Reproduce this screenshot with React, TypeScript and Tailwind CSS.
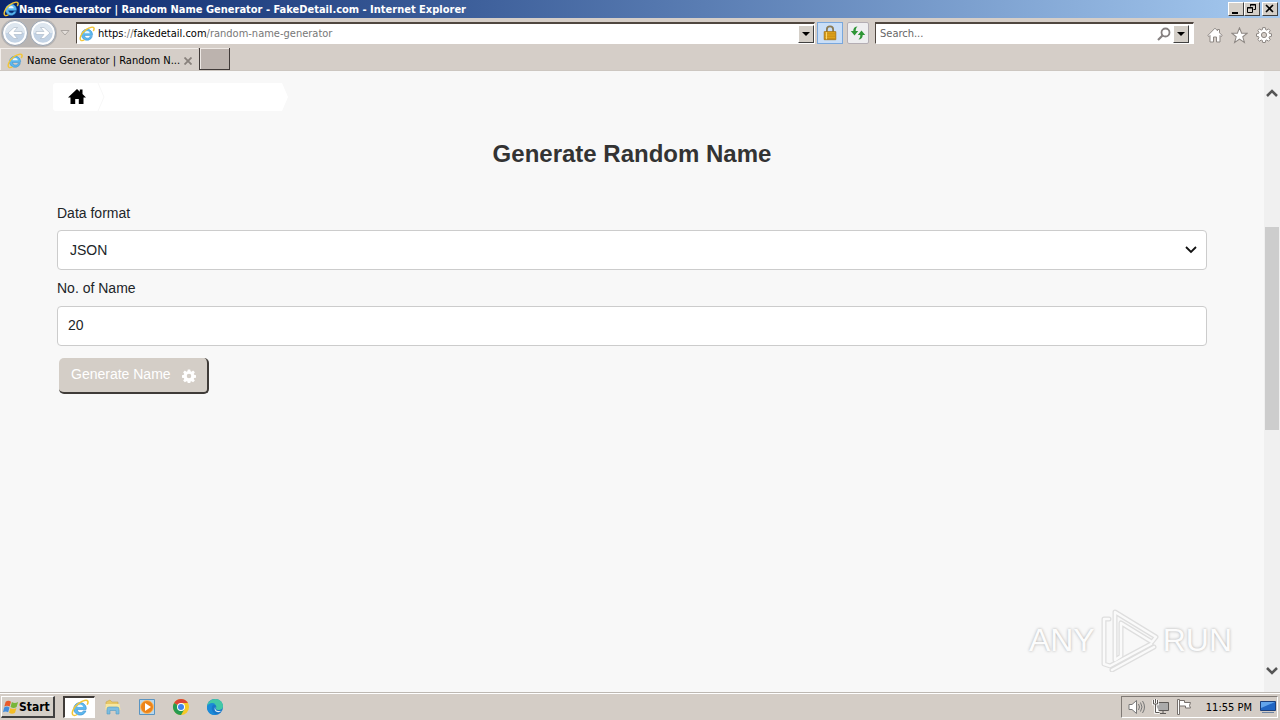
import React from "react";

const chromeFont = "font-['DejaVu_Sans_Condensed','DejaVu_Sans',sans-serif]";
const raised =
  "border border-t-white border-l-white border-r-[#404040] border-b-[#404040] bg-[#d4cfc8]";

function IeIcon({ className = "size-4" }: { className?: string }) {
  return (
    <svg viewBox="0 0 16 16" className={`shrink-0 ${className}`} fill="none">
      <path d="M13.4 9.4H5.4a3 3 0 0 0 5.600 1.200h2.300A5.600 5.600 0 1 1 13.600 8.200z" fill="#5db8ee" stroke="#2b86cd" strokeWidth=".5" />
      <path d="M5.400 7.200h5.500a2.800 2.800 0 0 0-5.500 0z" fill="#eef7fd" />
      <path d="M2 14.4C-.2 12.6 2.400 6.800 7.200 3.600c3.500-2.400 6.900-3.100 7.700-1.700.4.8.1 2-.6 3.100" stroke="#f3c534" strokeWidth="1.400" />
      <path d="M2 14.400c.9.600 2.200.2 3.500-.6" stroke="#f3c534" strokeWidth="1.200" />
    </svg>
  );
}

function TitleBar() {
  return (
    <header className="flex h-[18px] items-center justify-between bg-linear-to-r from-[#0a246a] to-[#a6caf0] pr-0.5 pl-[3px]">
      <div className="flex items-center">
        <IeIcon />
        <h1 className="pt-px text-[11px] leading-4 font-bold whitespace-nowrap text-white">
          Name Generator | Random Name Generator - FakeDetail.com - Internet Explorer
        </h1>
      </div>
      <div className="flex">
        <button aria-label="Minimize" className={`h-[14px] w-4 ${raised}`}>
          <svg viewBox="0 0 14 12" className="h-3 w-[14px]">
            <path d="M3 9h6v2H3z" />
          </svg>
        </button>
        <button aria-label="Restore" className={`h-[14px] w-4 ${raised}`}>
          <svg viewBox="0 0 14 12" className="h-3 w-[14px]" fill="none" stroke="#000">
            <path d="M5.500 3.500V1.500h5v5h-2M5 2h6M2.500 4.500h5v5h-5zM2 5h6" />
          </svg>
        </button>
        <button aria-label="Close" className={`ml-0.5 h-[14px] w-4 ${raised}`}>
          <svg viewBox="0 0 14 12" className="h-3 w-[14px]" stroke="#000" strokeWidth="1.600">
            <path d="M3 2l7 7M10 2l-7 7" />
          </svg>
        </button>
      </div>
    </header>
  );
}

function NavArrow({ label, flip }: { label: string; flip?: boolean }) {
  return (
    <button aria-label={label} className="size-7">
      <svg viewBox="0 0 28 28" className="size-7">
        <circle cx="14" cy="14" r="12.500" fill="#f4f6f9" stroke="#9ba5b2" />
        <circle cx="14" cy="14" r="10.500" fill="#c3d3e5" stroke="#fff" strokeWidth="1.500" />
        <path d="M4 14a10 10 0 0 1 20 0z" fill="#dde6ef" />
        <path
          d={flip ? "M7 12.500h8l-3.500-4H15l6 5.500-6 5.500h-3.500l3.500-4H7z" : "M21 12.500h-8l3.500-4H13L7 14l6 5.500h3.500l-3.500-4h8z"}
          fill="#fff"
          stroke="#a7b5c5"
          strokeWidth=".6"
        />
      </svg>
    </button>
  );
}

function DropButton({ label }: { label: string }) {
  return (
    <button aria-label={label} className={`flex h-[18px] w-4 shrink-0 items-center justify-center ${raised}`}>
      <svg viewBox="0 0 8 4" className="h-1 w-2">
        <path d="M0 0h8L4 4z" />
      </svg>
    </button>
  );
}

function AddressRow() {
  return (
    <div className="flex h-[30px] items-center">
      <div className="ml-px flex rounded-full bg-[#b9b5b3]">
        <NavArrow label="Back" />
        <NavArrow label="Forward" flip />
      </div>
      <button aria-label="Recent pages" className="ml-0.5 flex h-5 w-3 items-center justify-center">
        <svg viewBox="0 0 10 6" className="h-1.5 w-2.5">
          <path d="M1 .5h8l-4 4.500z" fill="#e4dfdb" stroke="#aaa4a0" />
        </svg>
      </button>
      <div className="ml-[5px] flex h-[22px] flex-1 items-center border border-t-2 border-[#504740] border-r-white border-b-white bg-white pl-0.5">
        <IeIcon />
        <div className="ml-[3px] flex-1 text-[11px] leading-4 text-[#777]">
          <span className="text-black">https</span>://<span className="text-black">fakedetail.com</span>
          /random-name-generator
        </div>
        <DropButton label="Show address history" />
      </div>
      <button aria-label="Security report" className="ml-0.5 flex h-[22px] w-[26px] items-center justify-center border border-[#79a7dc] bg-[#c9def7]">
        <svg viewBox="0 0 14 18" className="h-4 w-[14px]">
          <path d="M3.500 8V5a3.500 3.500 0 0 1 7 0v3" fill="none" stroke="#8b7b55" strokeWidth="2" />
          <path d="M.5 7.500h13v9H.5z" fill="#e5a81b" stroke="#a77312" />
          <path d="M1 10h12M1 12.500h12M1 15h12" stroke="#b67e12" strokeWidth=".8" />
          <path d="M3 8v8" stroke="#ffe282" />
        </svg>
      </button>
      <button aria-label="Refresh" className="ml-1 flex h-[22px] w-[22px] items-center justify-center rounded-xs border border-[#b4aeb4] bg-[#eeeef0]">
        <svg viewBox="0 0 16 16" className="size-4" fill="#2e9636">
          <path d="M7.500 1.500C5 1.600 3.300 3 3.300 6H.8l3.700 4.500L8.200 6H5.700c0-2 .5-3.300 1.800-4.500z" />
          <path d="M8.500 14.500c2.500-.1 4.200-1.500 4.200-4.500h2.500l-3.700-4.500L7.800 10h2.500c0 2-.5 3.300-1.800 4.500z" />
        </svg>
      </button>
      <div className="mr-[13px] ml-1.5 flex h-[22px] w-[319px] items-center border border-t-2 border-[#504740] border-r-white border-b-white bg-white pr-1 pl-1">
        <input
          type="text"
          aria-label="Search"
          placeholder="Search..."
          className="min-w-0 flex-1 text-[11px] leading-4 outline-none placeholder:text-[#666]"
        />
        <button aria-label="Go" className="mr-0.5">
          <svg viewBox="0 0 14 14" className="size-[14px]" fill="none" stroke="#858080" strokeWidth="1.800">
            <circle cx="8.500" cy="5.500" r="4" />
            <path d="M5.500 8.500l-4.500 4.500" strokeWidth="2.200" />
          </svg>
        </button>
        <DropButton label="Search options" />
      </div>
      <div className="flex items-center gap-2 pt-1 pr-2">
        <button aria-label="Home">
          <svg viewBox="0 0 16 16" className="size-4" fill="#fff" stroke="#8d8783">
            <path d="M8 1.200L.8 8.500l1.200 1 1-1V15h3.500v-5h3v5H13V8.500l1 1 1.200-1L12.500 5.800V2.500h-2v1.300z" />
          </svg>
        </button>
        <button aria-label="Favorites">
          <svg viewBox="0 0 16 16" className="size-[17px]" fill="#fff" stroke="#8d8783">
            <path d="M8 .8l2 5h5.300l-4.200 3.400 1.500 5.300L8 11.400l-4.600 3.100 1.500-5.300L.7 5.800H6z" />
          </svg>
        </button>
        <button aria-label="Tools">
          <svg viewBox="0 0 16 16" className="size-4" fill="#fff" stroke="#8d8783">
            <path d="M6.700.6h2.600l.3 2 1.200.5 1.700-1.200 1.700 1.700-1.200 1.700.5 1.200 2 .3v2.500l-2 .3-.5 1.200 1.200 1.700-1.700 1.700-1.700-1.200-1.200.5-.3 2H6.700l-.3-2-1.200-.5-1.700 1.200-1.700-1.700L3 10.800l-.5-1.200-2-.3V6.800l2-.3.5-1.200-1.200-1.700 1.700-1.700 1.700 1.200 1.200-.5z" />
            <circle cx="8" cy="8" r="2.600" fill="#d5cec8" />
          </svg>
        </button>
      </div>
    </div>
  );
}

function TabRow() {
  return (
    <nav className="flex h-[23px] border-b border-[#cdc7c1]">
      <div className="flex w-[198px] items-center border-t border-l border-[#f3efec] pt-0.5 pl-1.5">
        <IeIcon />
        <a href="#" className="ml-1 w-[157px] text-[11px] leading-4 whitespace-nowrap text-black">
          Name Generator | Random N...
        </a>
        <button aria-label="Close tab">
          <svg viewBox="0 0 8 8" className="size-2" stroke="#88817c" strokeWidth="1.800">
            <path d="M.5.500l7 7M7.500.500l-7 7" />
          </svg>
        </button>
      </div>
      <button
        aria-label="New tab"
        className="ml-px h-[22px] w-[31px] border-r border-b border-l border-[#403a38] bg-[#bcb3ae] shadow-[inset_1px_1px_#eee9e5]"
      />
    </nav>
  );
}

function Breadcrumb() {
  return (
    <nav aria-label="Breadcrumb" className="-ml-1 flex h-7">
      <a href="#" aria-label="Home" className="h-7 w-[236px]">
        <svg viewBox="0 0 236 28" className="h-7 w-[236px]">
          <path d="M3 0h226l6 14-6 14H3a3 3 0 0 1-3-3V3a3 3 0 0 1 3-3z" fill="#fff" />
          <path d="M45 0l6 14-6 14" fill="none" stroke="#f7f7f7" />
          <path d="M24 6l-9 8.500h2.500V21h4.700v-5h3.600v5h4.700v-6.500H33L29.500 11V6.500h-2.700v2.200z" />
        </svg>
      </a>
    </nav>
  );
}

function GeneratorForm() {
  const field = "h-10 w-full rounded-[4px] border border-[#ccc] bg-white text-sm text-[#212529] outline-none";
  return (
    <form onSubmit={(e) => e.preventDefault()} className="text-sm leading-5 text-[#212529]">
      <label htmlFor="format" className="block">
        Data format
      </label>
      <div className="mt-[7px] grid items-center">
        <select id="format" defaultValue="JSON" className={`${field} col-start-1 row-start-1 appearance-none px-3`}>
          <option>JSON</option>
          <option>CSV</option>
          <option>XML</option>
        </select>
        <svg
          viewBox="0 0 12 8"
          className="pointer-events-none col-start-1 row-start-1 mr-2.5 h-2 w-3 justify-self-end"
          fill="none"
          stroke="#111"
          strokeWidth="1.800"
        >
          <path d="M1 1l5 5 5-5" />
        </svg>
      </div>
      <label htmlFor="count" className="mt-2 block">
        No. of Name
      </label>
      <input id="count" type="text" defaultValue="20" className={`${field} mt-2 block px-2.5 pb-0.5`} />
      <button
        type="submit"
        className="mt-3 ml-0.5 flex h-9 w-[150px] items-center justify-between rounded-[5px] border-r-2 border-b-2 border-[#3f3b38] bg-[#d4cec7] pr-[11px] pb-0.5 pl-3 text-white"
      >
        Generate Name
        <svg viewBox="0 0 16 16" className="mt-1 size-[14px]" fill="#fff" fillRule="evenodd">
          <path d="M6.600.5h2.800l.4 2.100 1.100.5 1.800-1.300 2 2-1.300 1.800.5 1.100 2.100.4v2.800l-2.100.4-.5 1.100 1.300 1.800-2 2-1.800-1.300-1.100.5-.4 2.100H6.600l-.4-2.100-1.100-.5-1.800 1.300-2-2 1.300-1.800-.5-1.100L0 9.900V7.100l2.100-.4.5-1.100-1.300-1.800 2-2 1.800 1.300 1.100-.5zM8 5.400a2.600 2.600 0 1 0 0 5.200 2.600 2.600 0 0 0 0-5.200z" />
        </svg>
      </button>
    </form>
  );
}

function Watermark() {
  return (
    <div className="pointer-events-none absolute right-12 bottom-5 flex items-center gap-1 font-['Liberation_Sans',sans-serif] text-[32px] leading-[64px] text-[#fcfcfc] [text-shadow:0_0_3px_#aaa]">
      <span>ANY</span>
      <svg viewBox="0 0 60 64" className="h-16 w-[60px]" fill="none" strokeLinejoin="round" strokeLinecap="round">
        <g stroke="#dedede" strokeWidth="5">
          <path d="M16 4l41 25-4 5-31-19v33l-6 4z" />
          <path d="M10 11H5v45l6 2 41-22M13 62l42-23" />
        </g>
        <g stroke="#fafafa" strokeWidth="2.500">
          <path d="M16 4l41 25-4 5-31-19v33l-6 4z" />
          <path d="M10 11H5v45l6 2 41-22M13 62l42-23" />
        </g>
      </svg>
      <span>RUN</span>
    </div>
  );
}

function ScrollBar() {
  return (
    <div className="flex w-4 shrink-0 flex-col items-center bg-[#f0f0f0] pt-4 pb-[17px]">
      <svg viewBox="0 0 12 8" className="mt-0.5 h-2 w-3" fill="none" stroke="#555" strokeWidth="2.500">
        <path d="M1 7l5-5 5 5" />
      </svg>
      <div className="flex w-full flex-1 flex-col px-px py-2">
        <div className="flex-[122]" />
        <div className="flex-[203] bg-[#cdcdcd]" />
        <div className="flex-[229]" />
      </div>
      <svg viewBox="0 0 12 8" className="h-2 w-3" fill="none" stroke="#555" strokeWidth="2.500">
        <path d="M1 1l5 5 5-5" />
      </svg>
    </div>
  );
}

function FolderIcon() {
  return (
    <svg viewBox="0 0 18 18" className="size-[18px]">
      <path d="M2 4l4-2 2 2h6v5H2z" fill="#e8c866" stroke="#c6a64d" strokeWidth=".6" />
      <path d="M1.500 6h14l1 6h-15z" fill="#f7e6a0" />
      <path d="M3 16v-5q0-2 2-2h8q2 0 2 2v5h-3v-3.500H6V16z" fill="#7dbde0" stroke="#519bc5" strokeWidth=".6" />
    </svg>
  );
}

function PlayerIcon() {
  return (
    <svg viewBox="0 0 18 18" className="size-[18px]">
      <path d="M1.500 1.500h15v15h-15z" fill="#b8d7ed" stroke="#5a94c1" />
      <circle cx="9" cy="9" r="6.500" fill="#ed8418" stroke="#f8bd6e" />
      <path d="M7 5l6 4-6 4z" fill="#fff" />
    </svg>
  );
}

function ChromeIcon() {
  return (
    <svg viewBox="0 0 18 18" className="size-[18px]">
      <circle cx="9" cy="9" r="8" fill="#f6c927" />
      <path d="M9 9L2.070 5A8 8 0 0 1 15.930 5H9z" fill="#dc4437" />
      <path d="M2.070 5A8 8 0 0 0 9 17l3.500-6L9 9z" fill="#279b51" />
      <circle cx="9" cy="9" r="4" fill="#fff" />
      <circle cx="9" cy="9" r="3" fill="#4083ed" />
    </svg>
  );
}

function EdgeIcon() {
  return (
    <svg viewBox="0 0 18 18" className="size-[18px]">
      <circle cx="9" cy="9" r="8" fill="#1877c9" />
      <path d="M1 8.500C1.500 4 5 1 9.300 1 14 1 17 4.500 17 8c0 3-2.300 4-4.500 4-2 0-3-.8-2.400-2C11 7.500 9 6 6.500 6 4 6 2 7 1 8.500z" fill="#42c8a6" />
      <path d="M1 8.500C2.200 4.800 7 4 9.500 6.200 7 6 5 8.500 6 12c.6 2.300 2.600 4 5 4.600C5 18.500.5 14 1 8.500z" fill="#1b8bd8" />
      <path d="M9.600 8.500c-1.500 2.500.7 5.500 5.800 4.300-1.300 1.500-3.700 2-5.500.7-1.600-1.200-1.800-3.700-.3-5z" fill="#e4eff7" />
    </svg>
  );
}

function TaskBar() {
  return (
    <footer className="flex h-7 items-center border-t border-[#bdb8b2] bg-[#d4cdc6] pt-px shadow-[inset_0_1px_#fff]">
      <button className={`ml-px flex h-[22px] w-[54px] items-center border-r-2 border-b-2 pl-px text-xs font-bold ${raised}`}>
        <svg viewBox="0 0 18 18" className="size-4 shrink-0">
          <path d="M3 3q3-2 6 0L7.500 8.500q-3-2-6 0z" fill="#e95b2b" />
          <path d="M10 3.500q3 2 7 0L15.300 9q-3.500 2-6.800 0z" fill="#78b63a" />
          <path d="M1.300 9.500q3-2 6 0L5.800 15q-3-2-5.800 0z" fill="#438ddd" />
          <path d="M8.300 10q3.300 2 6.800 0l-1.600 5.500q-3.300 2-6.700 0z" fill="#f4bd27" />
        </svg>
        Start
      </button>
      <div className="ml-2 flex items-center">
        <button
          aria-label="Internet Explorer"
          className="flex h-[22px] w-8 items-center justify-center border border-t-2 border-l-2 border-t-[#403c39] border-r-white border-b-white border-l-[#403c39] bg-white"
        >
          <IeIcon className="size-[18px]" />
        </button>
        <button aria-label="File Explorer" className="ml-[9px]">
          <FolderIcon />
        </button>
        <button aria-label="Media Player" className="ml-4">
          <PlayerIcon />
        </button>
        <button aria-label="Chrome" className="ml-4">
          <ChromeIcon />
        </button>
        <button aria-label="Edge" className="ml-4">
          <EdgeIcon />
        </button>
      </div>
      <div className="mr-0.5 ml-auto flex h-[22px] items-center border border-[#807a75] border-r-white border-b-white pr-px pl-1.5">
        <svg viewBox="0 0 18 16" className="h-4 w-[18px]" fill="#fff" stroke="#777">
          <path d="M1 5.500h3L8.500 1.500v13L4 10.500H1z" />
          <path d="M10.500 5q2 3 0 6M12.500 3.500q3 4.500 0 9M14.500 2q4 6 0 12" fill="none" />
        </svg>
        <svg viewBox="0 0 18 16" className="ml-1.5 h-4 w-[18px]" fill="#aaa" stroke="#5d5956">
          <path d="M4.500 3.500h12v8h-12zM8 14.500h6M11 12v2" />
          <path d="M1.500 1v4h4V1M3.500 0v4M3.500 5v8.500h4" fill="#fff" stroke="#fff" strokeWidth="2.500" />
          <path d="M1.500 1v4h4V1M3.500 0v4M3.500 5v8.500h4" fill="none" />
        </svg>
        <svg viewBox="0 0 18 16" className="ml-1.5 h-4 w-[18px]" fill="#fff" stroke="#77716d">
          <path d="M1.500.5h2v15h-2zM3.500 1.500h5v2h6l-1 3 1 2.500h-5v-2h-6z" />
        </svg>
        <time className="mr-2 ml-3 pt-px text-[11px] leading-4 whitespace-nowrap text-black">11:55 PM</time>
        <svg viewBox="0 0 16 14" className="h-[14px] w-4">
          <path d="M.5 1.500h15v9H.5z" fill="#2166c3" stroke="#1c407c" />
          <path d="M1 2h14L1 8z" fill="#62a5ec" />
          <path d="M2 12.500h12" stroke="#6d83a1" />
        </svg>
      </div>
    </footer>
  );
}

export default function App() {
  return (
    <div className={`flex h-screen min-h-96 flex-col bg-[#d5cec8] text-black ${chromeFont}`}>
      <TitleBar />
      <AddressRow />
      <TabRow />
      <div className="relative flex min-h-0 flex-1">
        <main className="min-w-0 flex-1 overflow-hidden bg-[#f8f8f8] px-[57px] pt-3 font-['Liberation_Sans',Arial,sans-serif]">
          <Breadcrumb />
          <h2 className="mt-[27px] mb-[33px] text-center text-2xl font-bold text-[#333]">Generate Random Name</h2>
          <GeneratorForm />
        </main>
        <ScrollBar />
        <Watermark />
      </div>
      <TaskBar />
    </div>
  );
}
